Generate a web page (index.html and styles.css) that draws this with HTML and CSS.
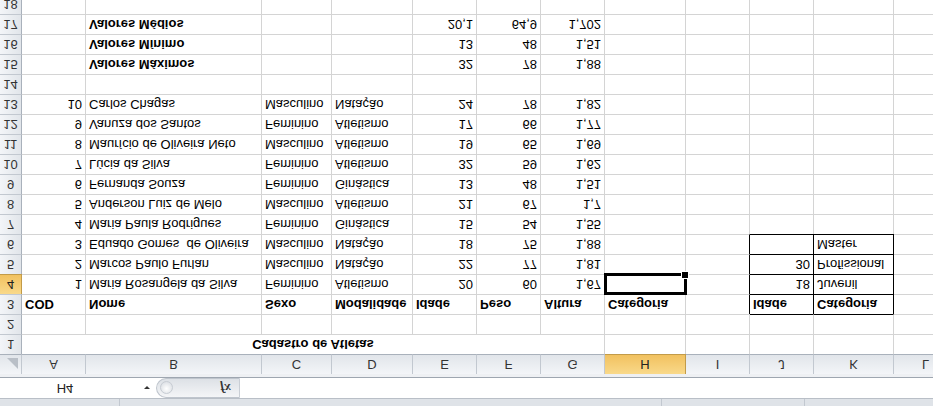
FILE: index.html
```html
<!DOCTYPE html>
<html>

<head>
  <title>Cadastro de Atletas</title>
  <link rel="stylesheet" href="styles.css">
</head>

<body>
  <div class="screen">
    <div class="ribbon-edge">
      <span class="seg seg-1"></span>
      <span class="seg seg-2"></span>
      <span class="seg seg-3"></span>
      <span class="seg seg-4"></span>
    </div>

    <div class="formula-bar">
      <div class="name-box">H4</div>
      <div class="name-arrow"><span class="tri"></span></div>
      <div class="fx-pill">
        <span class="grip"></span>
        <span class="fx">fx</span>
      </div>
      <div class="formula-input"></div>
    </div>
    <div class="bar-gap"></div>

    <div class="sheet">
      <!-- cabeçalho das colunas -->
      <div class="ch corner"><span class="corner-tri"></span></div>
      <div class="ch">A</div><div class="ch">B</div><div class="ch">C</div><div class="ch">D</div>
      <div class="ch">E</div><div class="ch">F</div><div class="ch">G</div><div class="ch sel">H</div>
      <div class="ch">I</div><div class="ch">J</div><div class="ch">K</div><div class="ch">L</div>

      <!-- linha 1 -->
      <div class="rh">1</div>
      <div class="c b title">Cadastro de Atletas</div>
      <div class="c"></div><div class="c"></div><div class="c"></div><div class="c"></div><div class="c"></div>

      <!-- linha 2 -->
      <div class="rh">2</div>
      <div class="c"></div><div class="c"></div><div class="c"></div><div class="c"></div><div class="c"></div>
      <div class="c"></div><div class="c"></div><div class="c"></div><div class="c"></div>
      <div class="c bt"></div><div class="c bt"></div><div class="c"></div>

      <!-- linha 3 -->
      <div class="rh">3</div>
      <div class="c b">COD</div><div class="c b">Nome</div><div class="c b">Sexo</div><div class="c b">Modalidade</div>
      <div class="c b">Idade</div><div class="c b">Peso</div><div class="c b">Altura</div><div class="c b">Categoria</div>
      <div class="c bl"></div><div class="c b bx">Idade</div><div class="c b bx">Categoria</div><div class="c"></div>

      <!-- linha 4 -->
      <div class="rh sel">4</div>
      <div class="c n">1</div><div class="c">Maria Rosangela da Silva</div><div class="c">Feminino</div><div class="c">Atletismo</div>
      <div class="c n">20</div><div class="c n">60</div><div class="c n">1,67</div>
      <div class="c active"><span class="cursor"><span class="handle"></span></span></div>
      <div class="c bl"></div><div class="c n bx">18</div><div class="c bx">Juvenil</div><div class="c"></div>

      <!-- linha 5 -->
      <div class="rh">5</div>
      <div class="c n">2</div><div class="c">Marcos Paulo Furlan</div><div class="c">Masculino</div><div class="c">Natação</div>
      <div class="c n">22</div><div class="c n">77</div><div class="c n">1,81</div><div class="c"></div>
      <div class="c bl"></div><div class="c n bx">30</div><div class="c bx">Profissional</div><div class="c"></div>

      <!-- linha 6 -->
      <div class="rh">6</div>
      <div class="c n">3</div><div class="c">Eduado Gomes  de Oliveira</div><div class="c">Masculino</div><div class="c">Natação</div>
      <div class="c n">18</div><div class="c n">75</div><div class="c n">1,88</div><div class="c"></div>
      <div class="c bl"></div><div class="c bx"></div><div class="c bx">Master</div><div class="c"></div>

      <!-- linha 7 -->
      <div class="rh">7</div>
      <div class="c n">4</div><div class="c">Maria Paula Rodrigues</div><div class="c">Feminino</div><div class="c">Ginástica</div>
      <div class="c n">15</div><div class="c n">54</div><div class="c n">1,55</div><div class="c"></div>
      <div class="c"></div><div class="c"></div><div class="c"></div><div class="c"></div>

      <!-- linha 8 -->
      <div class="rh">8</div>
      <div class="c n">5</div><div class="c">Anderson Luiz de Melo</div><div class="c">Masculino</div><div class="c">Atletismo</div>
      <div class="c n">21</div><div class="c n">67</div><div class="c n">1,7</div><div class="c"></div>
      <div class="c"></div><div class="c"></div><div class="c"></div><div class="c"></div>

      <!-- linha 9 -->
      <div class="rh">9</div>
      <div class="c n">6</div><div class="c">Fernanda Souza</div><div class="c">Feminino</div><div class="c">Ginástica</div>
      <div class="c n">13</div><div class="c n">48</div><div class="c n">1,51</div><div class="c"></div>
      <div class="c"></div><div class="c"></div><div class="c"></div><div class="c"></div>

      <!-- linha 10 -->
      <div class="rh">10</div>
      <div class="c n">7</div><div class="c">Lúcia da Silva</div><div class="c">Feminino</div><div class="c">Atletismo</div>
      <div class="c n">32</div><div class="c n">59</div><div class="c n">1,62</div><div class="c"></div>
      <div class="c"></div><div class="c"></div><div class="c"></div><div class="c"></div>

      <!-- linha 11 -->
      <div class="rh">11</div>
      <div class="c n">8</div><div class="c">Maurício de Oliveira Neto</div><div class="c">Masculino</div><div class="c">Atletismo</div>
      <div class="c n">19</div><div class="c n">65</div><div class="c n">1,69</div><div class="c"></div>
      <div class="c"></div><div class="c"></div><div class="c"></div><div class="c"></div>

      <!-- linha 12 -->
      <div class="rh">12</div>
      <div class="c n">9</div><div class="c">Vanuza dos Santos</div><div class="c">Feminino</div><div class="c">Atletismo</div>
      <div class="c n">17</div><div class="c n">66</div><div class="c n">1,77</div><div class="c"></div>
      <div class="c"></div><div class="c"></div><div class="c"></div><div class="c"></div>

      <!-- linha 13 -->
      <div class="rh">13</div>
      <div class="c n">10</div><div class="c">Carlos Chagas</div><div class="c">Masculino</div><div class="c">Natação</div>
      <div class="c n">24</div><div class="c n">78</div><div class="c n">1,82</div><div class="c"></div>
      <div class="c"></div><div class="c"></div><div class="c"></div><div class="c"></div>

      <!-- linha 14 -->
      <div class="rh">14</div>
      <div class="c"></div><div class="c"></div><div class="c"></div><div class="c"></div><div class="c"></div><div class="c"></div>
      <div class="c"></div><div class="c"></div><div class="c"></div><div class="c"></div><div class="c"></div><div class="c"></div>

      <!-- linha 15 -->
      <div class="rh">15</div>
      <div class="c"></div><div class="c b">Valores Máximos</div><div class="c"></div><div class="c"></div>
      <div class="c n">32</div><div class="c n">78</div><div class="c n">1,88</div><div class="c"></div>
      <div class="c"></div><div class="c"></div><div class="c"></div><div class="c"></div>

      <!-- linha 16 -->
      <div class="rh">16</div>
      <div class="c"></div><div class="c b">Valores Mínimo</div><div class="c"></div><div class="c"></div>
      <div class="c n">13</div><div class="c n">48</div><div class="c n">1,51</div><div class="c"></div>
      <div class="c"></div><div class="c"></div><div class="c"></div><div class="c"></div>

      <!-- linha 17 -->
      <div class="rh">17</div>
      <div class="c"></div><div class="c b">Valores Médios</div><div class="c"></div><div class="c"></div>
      <div class="c n">20,1</div><div class="c n">64,9</div><div class="c n">1,702</div><div class="c"></div>
      <div class="c"></div><div class="c"></div><div class="c"></div><div class="c"></div>

      <!-- linha 18 -->
      <div class="rh">18</div>
      <div class="c"></div><div class="c"></div><div class="c"></div><div class="c"></div><div class="c"></div><div class="c"></div>
      <div class="c"></div><div class="c"></div><div class="c"></div><div class="c"></div><div class="c"></div><div class="c"></div>
    </div>
  </div>
</body>

</html>
```

FILE: styles.css
```css
/* Planilha de cadastro (a captura aparece virada de cabeça para baixo) */
body {
  margin: 0;
  background: #fff;
  font-family: "Liberation Sans", Arial, sans-serif;
  font-size: 13px;
  color: #000;
}

.screen {
  width: 933px;
  height: 406px;
  overflow: hidden;
  transform: scaleY(-1);
}

/* borda inferior da faixa de opções */
.ribbon-edge {
  display: flex;
  height: 7px;
  background: #dfe3e8;
}

.ribbon-edge .seg {
  border-right: 1px solid #c2c8d0;
}

.seg-1 { width: 119px; }
.seg-2 { width: 541px; }
.seg-3 { width: 142px; }
.seg-4 { flex: 1; border-right: none !important; }

/* barra de fórmulas */
.formula-bar {
  display: flex;
  height: 20px;
  border-top: 1px solid #b9bfc7;
  border-bottom: 1px solid #9ea6b0;
  background: #fff;
}

.name-box {
  width: 130px;
  padding-right: 8px;
  text-align: center;
  line-height: 20px;
  color: #222;
}

.name-arrow {
  width: 18px;
  display: flex;
  align-items: center;
  justify-content: center;
}

.name-arrow .tri {
  width: 0;
  height: 0;
  border-left: 3px solid transparent;
  border-right: 3px solid transparent;
  border-top: 3px solid #333;
}

.fx-pill {
  width: 84px;
  display: flex;
  align-items: center;
  justify-content: space-between;
  padding: 0 8px 0 3px;
  box-sizing: border-box;
  background: linear-gradient(#f4f5f7, #dde1e6);
  border: 1px solid #bfc5cd;
  border-right: 1px solid #c9ced5;
  border-radius: 10px 0 0 10px;
}

.fx-pill .grip {
  width: 11px;
  height: 11px;
  border-radius: 50%;
  background: radial-gradient(circle at 50% 40%, #fff, #d3d8de);
  border: 1px solid #c7ccd3;
}

.fx-pill .fx {
  font-family: "Liberation Serif", serif;
  font-style: italic;
  font-weight: bold;
  font-size: 13px;
  color: #333;
}

.formula-input {
  flex: 1;
  background: #fff;
}

.bar-gap {
  height: 3px;
  background: #eef0f3;
}

/* grade da planilha */
.sheet {
  display: grid;
  grid-template-columns: 22px 64px 176px 70px 81px 64px 64px 64px 81px 64px 64px 80px 64px;
  grid-auto-rows: 20px;
}

.ch,
.rh,
.c {
  box-sizing: border-box;
  border-right: 1px solid #d4d4d4;
  border-bottom: 1px solid #d4d4d4;
  line-height: 19px;
  white-space: pre;
}

.ch {
  background: linear-gradient(#f3f5f8, #e1e5ea);
  border-right-color: #c2c8d0;
  border-bottom-color: #a9b1bb;
  text-align: center;
  color: #333;
}

.rh {
  background: linear-gradient(90deg, #f3f5f8, #e1e5ea);
  border-right-color: #a9b1bb;
  border-bottom-color: #c2c8d0;
  text-align: center;
  color: #333;
}

.ch.sel,
.rh.sel {
  background: linear-gradient(#f9d98a, #f1c15f);
  border-color: #c29b49;
  color: #222;
}

.corner {
  position: relative;
}

.corner-tri {
  position: absolute;
  right: 3px;
  bottom: 3px;
  width: 0;
  height: 0;
  border-left: 11px solid transparent;
  border-bottom: 11px solid #b9bfc7;
}

.c {
  padding: 0 3px;
}

.c.n {
  text-align: right;
}

.c.b {
  font-weight: bold;
}

.c.title {
  grid-column: span 7;
  text-align: center;
}

/* tabela de categorias com borda preta */
.c.bt {
  border-bottom-color: #000;
}

.c.bl {
  border-right-color: #000;
}

.c.bx {
  border-right-color: #000;
  border-bottom-color: #000;
}

/* célula ativa H4 */
.c.active {
  position: relative;
}

.cursor {
  position: absolute;
  left: -1px;
  top: -1px;
  width: 83px;
  height: 22px;
  box-sizing: border-box;
  border: 3px solid #000;
}

.handle {
  position: absolute;
  right: -5px;
  bottom: -5px;
  width: 6px;
  height: 6px;
  background: #000;
  border: 1px solid #fff;
}
```
